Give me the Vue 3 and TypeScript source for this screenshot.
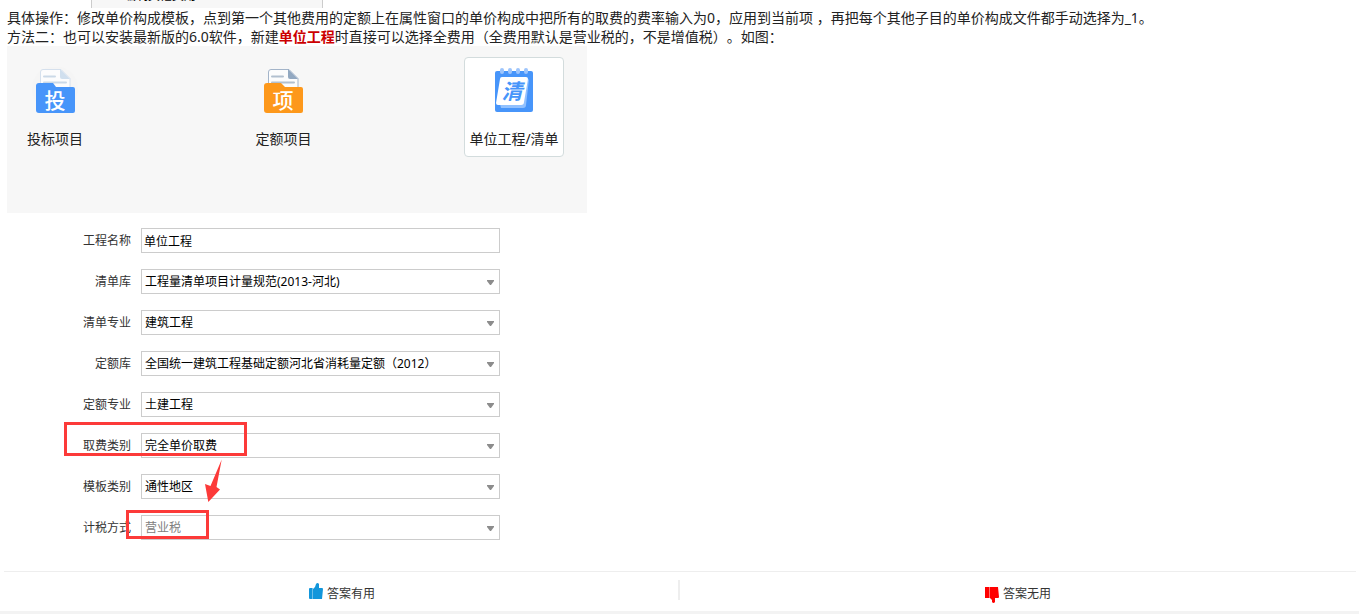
<script setup lang="ts">
import { ref } from 'vue'

interface Field {
  id: string
  label: string
  value: string
  disabled?: boolean
  mark?: 'fee' | 'tax'
}

const projectName = ref('单位工程')
const fields: Field[] = [
  { id: 'list-library', label: '清单库', value: '工程量清单项目计量规范(2013-河北)' },
  { id: 'list-major', label: '清单专业', value: '建筑工程' },
  { id: 'quota-library', label: '定额库', value: '全国统一建筑工程基础定额河北省消耗量定额（2012）' },
  { id: 'quota-major', label: '定额专业', value: '土建工程' },
  { id: 'fee-type', label: '取费类别', value: '完全单价取费', mark: 'fee' },
  { id: 'template-type', label: '模板类别', value: '通性地区' },
  { id: 'tax-mode', label: '计税方式', value: '营业税', disabled: true, mark: 'tax' },
]
</script>

<template>
  <main class="answer">
    <div class="previous"><span>编制其他费用</span></div>

    <p class="text">具体操作：修改单价构成模板，点到第一个其他费用的定额上在属性窗口的单价构成中把所有的取费的费率输入为0，应用到当前项 ，再把每个其他子目的单价构成文件都手动选择为_1。</p>
    <p class="text">方法二：也可以安装最新版的6.0软件，新建<a class="term" href="#project-name">单位工程</a>时直接可以选择全费用（全费用默认是营业税的，不是增值税）。如图：</p>

    <section class="figure">
      <div class="kinds">
        <button class="kind" type="button">
          <svg class="icon" viewBox="0 0 48 48" aria-hidden="true">
            <circle cx="24" cy="22" r="23" fill="#f5f5f5" />
            <path d="M12 2.5h18l9 9V29H9.5V5a2.5 2.5 0 0 1 2.5-2.5z" fill="#fcfcfd" stroke="#d5e0ed" />
            <path d="M29 2l10 10h-8a2 2 0 0 1-2-2z" fill="#d0dfee" />
            <path d="M13 9.5h11M13 15.5h22" stroke="#cbd9e8" stroke-width="2" stroke-linecap="round" />
            <path d="M8 16h14l3 4h17a2 2 0 0 1 2 2v22a2 2 0 0 1-2 2H8a3 3 0 0 1-3-3V19a3 3 0 0 1 3-3z" fill="#4795fa" />
            <text x="24" y="41" text-anchor="middle" font-size="21" font-weight="500" fill="#fff">投</text>
          </svg>
          <span>投标项目</span>
        </button>
        <button class="kind" type="button">
          <svg class="icon" viewBox="0 0 48 48" aria-hidden="true">
            <path d="M11 2.5h18l9 9V29H8.5V5a2.5 2.5 0 0 1 2.5-2.5z" fill="#fcfcfd" stroke="#a3b4c9" />
            <path d="M28 2l10 10h-8a2 2 0 0 1-2-2z" fill="#92a8c1" />
            <path d="M12 9.5h11M12 15.5h22" stroke="#b2c0d0" stroke-width="2" stroke-linecap="round" />
            <path d="M7 16h14l4 4h16a2 2 0 0 1 2 2v22a2 2 0 0 1-2 2H7a3 3 0 0 1-3-3V19a3 3 0 0 1 3-3z" fill="#fd981b" />
            <text x="23" y="41" text-anchor="middle" font-size="21" font-weight="500" fill="#fff">项</text>
          </svg>
          <span>定额项目</span>
        </button>
        <button class="kind selected" type="button">
          <svg class="icon" viewBox="0 0 48 48" aria-hidden="true">
            <rect x="5" y="4" width="38" height="41" rx="2" fill="#4795fa" />
            <g fill="#9dc5fc">
              <rect x="10" y="1" width="4" height="6" rx="2" />
              <rect x="18" y="1" width="4" height="6" rx="2" />
              <rect x="26" y="1" width="4" height="6" rx="2" />
              <rect x="34" y="1" width="4" height="6" rx="2" />
            </g>
            <path d="M10 37l1 4h22a3 3 0 0 0 3-3l3-26z" fill="#91c1ff" />
            <path d="M12 10h24a2 2 0 0 1 2 2l-4 23a3 3 0 0 1-3 3H8a2 2 0 0 1-2-2l4-24a2 2 0 0 1 2-2z" fill="#fff" />
            <text x="22" y="32" text-anchor="middle" font-size="21" font-weight="700" font-style="italic" fill="#4795fa">清</text>
          </svg>
          <span>单位工程/清单</span>
        </button>
      </div>

      <form class="form" @submit.prevent>
        <div class="row">
          <label for="project-name">工程名称</label>
          <input id="project-name" v-model="projectName" class="control" type="text" />
        </div>
        <div v-for="field in fields" :key="field.id" class="row">
          <label :for="field.id">{{ field.label }}</label>
          <div class="picker">
            <select :id="field.id" class="control" :disabled="field.disabled">
              <option>{{ field.value }}</option>
            </select>
            <svg class="caret" viewBox="0 0 7 5" aria-hidden="true"><path d="M0 0h7v1L4 5H3L0 1z" fill="#8c8c8c" /></svg>
          </div>
          <span v-if="field.mark" class="mark" :class="field.mark"></span>
          <svg v-if="field.mark === 'fee'" class="arrow" viewBox="0 0 18 44" aria-hidden="true">
            <path d="M17.7.5L6.5 27 1 25l3.300 18L16 30.5 12.5 28z" fill="#fc3a39" />
          </svg>
        </div>
      </form>
    </section>

    <footer class="footer">
      <div class="votes">
        <button class="vote" type="button">
          <svg class="thumb" viewBox="0 0 14 16" aria-hidden="true">
            <path d="M1 5h2v11H1a1 1 0 0 1-1-1V6a1 1 0 0 1 1-1zM4 6l2-2 1-3q1.5-2 3 0v4h3a1 1 0 0 1 1 1l-1 10H4z" fill="#1296db" />
            <path d="M3 5h1v11H3z" fill="#6dbfe9" />
          </svg>
          <span>答案有用</span>
        </button>
        <button class="vote" type="button">
          <svg class="thumb down" viewBox="0 0 14 16" aria-hidden="true">
            <path d="M0 0h4v11H0zM5 0h8l1 10a1 1 0 0 1-1 1h-3v4q-1.5 2-3 0v-2l-2-2z" fill="#f00" />
            <path d="M4 0h1v11H4z" fill="#ff7070" />
          </svg>
          <span>答案无用</span>
        </button>
      </div>
    </footer>
  </main>
</template>

<style>
body {
  margin: 0;
  background: #fff;
}
</style>

<style scoped>
.answer {
  font-family: "Noto Sans", "Noto Sans CJK SC", sans-serif;
  font-size: 14px;
  color: #222;
  text-spacing-trim: space-all;
}
button {
  padding: 0;
  border: 0;
  background: none;
  color: inherit;
  font: inherit;
}
.previous {
  box-sizing: border-box;
  display: flex;
  align-items: flex-end;
  width: 232px;
  height: 8px;
  margin-left: 91px;
  padding: 0 32px 2px;
  overflow: hidden;
  border: solid #ccc;
  border-width: 0 1px;
  background: #f7f7f7;
  font-size: 12px;
  line-height: 20px;
  color: #000;
}
.text {
  margin: 0 7px;
  line-height: 19px;
}
.term {
  color: #c00;
  font-weight: 700;
  text-decoration: none;
}
.figure {
  max-width: 580px;
  margin-left: 7px;
}
.kinds {
  box-sizing: border-box;
  display: flex;
  justify-content: space-between;
  height: 167px;
  padding: 11px 23px 0 0;
  background: #f7f7f7;
}
.kind {
  box-sizing: border-box;
  display: flex;
  flex-direction: column;
  align-items: center;
  gap: 13px;
  width: 96px;
  height: 100px;
  padding-top: 9px;
  border: 1px solid transparent;
  border-radius: 4px;
  line-height: 22px;
  white-space: nowrap;
}
.kind.selected {
  width: 100px;
  border-color: #d3dcdd;
  background: #fff;
}
.icon {
  width: 48px;
  height: 48px;
  flex: none;
}
.icon text {
  font-family: "Noto Sans CJK SC", sans-serif;
}
.form {
  display: flex;
  flex-direction: column;
  gap: 16px;
  padding: 15px 87px 0 57px;
}
.row {
  position: relative;
  display: grid;
  grid-template-columns: 67px 1fr;
  column-gap: 10px;
  align-items: start;
  font-size: 12px;
}
.row label {
  line-height: 25px;
  text-align: right;
  color: #333;
}
.picker {
  position: relative;
}
.control {
  box-sizing: border-box;
  display: block;
  width: 100%;
  height: 25px;
  margin: 0;
  padding: 0 20px 0 3px;
  appearance: none;
  border: 1px solid #ccc;
  border-radius: 0;
  background: #fff;
  color: #000;
  font: inherit;
  opacity: 1;
}
input.control {
  padding: 0 2px;
}
.control:disabled {
  color: #808080;
}
.caret {
  position: absolute;
  top: 11px;
  right: 6px;
  width: 7px;
  height: 5px;
  pointer-events: none;
}
.mark {
  position: absolute;
  box-sizing: border-box;
  border: 3px solid #fc3a39;
  pointer-events: none;
}
.mark.fee {
  top: -11px;
  left: 0;
  width: 183px;
  height: 34px;
}
.mark.tax {
  top: -5px;
  left: 62px;
  width: 83px;
  height: 29px;
}
.arrow {
  position: absolute;
  top: 26px;
  left: 140px;
  z-index: 1;
  width: 18px;
  height: 44px;
}
.footer {
  margin-top: 31px;
  border-bottom: 3px solid #f3f3f3;
}
.votes {
  display: grid;
  grid-template-columns: 1fr 1fr;
  margin: 0 3px 0 4px;
  padding: 8px 0 11px;
  border-top: 1px solid #eee;
  font-size: 12px;
  color: #333;
}
.vote {
  display: flex;
  align-items: flex-start;
  justify-content: center;
  gap: 4px;
  height: 20px;
  line-height: 28px;
}
.vote:first-child {
  box-shadow: inset -2px 0 #eee;
}
.thumb {
  width: 14px;
  height: 16px;
  margin-top: 3px;
}
.thumb.down {
  margin-top: 7px;
}
</style>
